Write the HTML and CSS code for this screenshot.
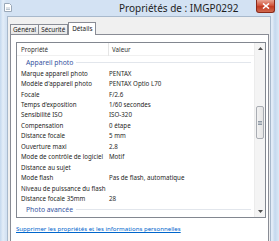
FILE: index.html
```html
<!DOCTYPE html>
<html lang="fr">
<head>
<meta charset="utf-8">
<title>Propriétés de : IMGP0292</title>
<link rel="stylesheet" href="styles.css">
</head>
<body>
<div class="window">
  <div class="titlebar">
    <svg class="appicon" width="8" height="9" viewBox="0 0 8 9"><path d="M0.5 0.5h5l2 2v6h-7z" fill="#fff" stroke="#9aa8b8"/><path d="M2 5h4M2 6.5h4" stroke="#b8c4d0"/></svg>
    <div class="title">Propriétés de : IMGP0292</div>
    <div class="close"><svg width="8" height="6" viewBox="0 0 8 6"><path d="M1 0.5L7 5.5M7 0.5L1 5.5" stroke="#fff" stroke-width="1.6"/></svg></div>
  </div>
  <div class="frame">
    <div class="client">
      <div class="tabs">
        <div class="tab">Général</div>
        <div class="tab">Sécurité</div>
        <div class="tab active">Détails</div>
      </div>
      <div class="panel">
        <div class="listview">
          <div class="lv-main">
            <div class="header"><span class="c1">Propriété</span><span class="c2">Valeur</span></div>
            <div class="group"><span>Appareil photo</span><i></i></div>
            <div class="row"><span class="c1">Marque appareil photo</span><span class="c2">PENTAX</span></div>
            <div class="row"><span class="c1">Modèle d'appareil photo</span><span class="c2">PENTAX Optio L70</span></div>
            <div class="row"><span class="c1">Focale</span><span class="c2">F/2.6</span></div>
            <div class="row"><span class="c1">Temps d'exposition</span><span class="c2">1/60 secondes</span></div>
            <div class="row"><span class="c1">Sensibilité ISO</span><span class="c2">ISO-320</span></div>
            <div class="row"><span class="c1">Compensation</span><span class="c2">0 étape</span></div>
            <div class="row"><span class="c1">Distance focale</span><span class="c2">5 mm</span></div>
            <div class="row"><span class="c1">Ouverture maxi</span><span class="c2">2.8</span></div>
            <div class="row"><span class="c1">Mode de contrôle de logiciel</span><span class="c2">Motif</span></div>
            <div class="row"><span class="c1">Distance au sujet</span><span class="c2"></span></div>
            <div class="row"><span class="c1">Mode flash</span><span class="c2">Pas de flash, automatique</span></div>
            <div class="row"><span class="c1">Niveau de puissance du flash</span><span class="c2"></span></div>
            <div class="row"><span class="c1">Distance focale 35mm</span><span class="c2">28</span></div>
            <div class="group"><span>Photo avancée</span><i></i></div>
          </div>
          <div class="scrollbar">
            <div class="arrow"><svg width="5" height="3" viewBox="0 0 5 3"><path d="M0 3L2.5 0L5 3z" fill="#4d4d4d"/></svg></div>
            <div class="track">
              <div class="gap-top"></div>
              <div class="thumb"><svg width="4" height="4" viewBox="0 0 4 4"><path d="M0 0.5h4M0 2h4M0 3.5h4" stroke="#8f9aa6"/></svg></div>
            </div>
            <div class="arrow"><svg width="5" height="3" viewBox="0 0 5 3"><path d="M0 0L2.5 3L5 0z" fill="#4d4d4d"/></svg></div>
          </div>
        </div>
        <a class="link" href="#">Supprimer les propriétés et les informations personnelles</a>
      </div>
    </div>
  </div>
</div>
</body>
</html>
```

FILE: styles.css
```css
* { box-sizing: border-box; }
html, body { margin: 0; padding: 0; }
body {
  width: 279px;
  height: 241px;
  overflow: hidden;
  background: #d6e4f3;
  font-family: "Noto Sans", "Open Sans", sans-serif;
}
.window {
  height: 241px;
  display: flex;
  flex-direction: column;
  background: linear-gradient(90deg, #c4d8ee 0px, #e3edf8 3px, #d3e2f3 6px, #d3e2f3 270px, #e6eef8 272px, #c4d8ee 275px, #dce8f5 279px);
}
.titlebar {
  height: 16px;
  display: flex;
  align-items: center;
  padding-left: 4px;
  position: relative;
}
.appicon { display: block; margin-top: -2px; }
.title {
  margin-left: 107px;
  font-size: 10px;
  color: #1e1e1e;
  white-space: nowrap;
}
.close {
  position: absolute;
  left: 256px;
  top: 0;
  width: 19px;
  height: 13px;
  border: 1px solid #8a2a1a;
  border-top: none;
  border-radius: 0 0 3px 3px;
  background: linear-gradient(#e8a493, #d2563e 45%, #c23b22 55%, #d0684e);
  display: flex;
  align-items: center;
  justify-content: center;
}
.close svg { display: block; }
.frame {
  flex: 1;
  padding: 0 8px 0 7px;
  display: flex;
}
.client {
  flex: 1;
  background: #f0f0f0;
  border: 1px solid #a8b9cc;
  border-bottom: none;
  padding: 5px 1px 0 2px;
  display: flex;
  flex-direction: column;
}
.tabs {
  display: flex;
  align-items: flex-end;
  height: 12px;
  position: relative;
  z-index: 1;
}
.tab {
  height: 10px;
  padding: 0 2px;
  font-size: 6.3px;
  line-height: 9px;
  color: #1a1a1a;
  border: 1px solid #898c95;
  border-bottom: none;
  margin-right: -1px;
  background: linear-gradient(#f6f6f6, #e6e6e6);
}
.tab.active {
  height: 13px;
  padding: 1px 3px 0;
  margin-bottom: -1px;
  margin-left: 1px;
  background: #fff;
}
.panel {
  flex: 1;
  background: #fff;
  border: 1px solid #898c95;
  border-bottom: none;
  padding: 7px 2px 0 5px;
  display: flex;
  flex-direction: column;
}
.listview {
  height: 176px;
  border: 1px solid #828790;
  display: flex;
  background: #fff;
}
.lv-main {
  flex: 1;
  display: flex;
  flex-direction: column;
  font-size: 6.2px;
  color: #262626;
}
.header {
  height: 13px;
  display: flex;
  align-items: center;
  border-bottom: 1px solid #f0f0f0;
  color: #333;
}
.c1 {
  width: 92px;
  padding-left: 4px;
  white-space: nowrap;
  flex: none;
}
.c2 { white-space: nowrap; }
.header .c1 { border-right: 1px solid #e5e5e5; height: 13px; line-height: 13px; }
.header .c2 { padding-left: 3px; }
.group {
  height: 12px;
  display: flex;
  align-items: center;
  padding-left: 9px;
  padding-right: 3px;
  color: #3553a0;
  font-size: 6.8px;
}
.group i {
  flex: 1;
  height: 1px;
  margin-left: 3px;
  background: #e2e6ec;
}
.row {
  height: 10.45px;
  display: flex;
  align-items: center;
}
.scrollbar {
  width: 11px;
  display: flex;
  flex-direction: column;
  background: #f4f4f4;
  border-left: 1px solid #ececec;
}
.arrow {
  height: 11px;
  display: flex;
  align-items: center;
  justify-content: center;
}
.arrow svg { display: block; }
.track { flex: 1; display: flex; flex-direction: column; padding: 0 1px; }
.gap-top { height: 52px; }
.thumb {
  height: 33px;
  border: 1px solid #a9adb3;
  border-radius: 2px;
  background: linear-gradient(90deg, #f2f2f2, #e4e4e4);
  display: flex;
  align-items: center;
  justify-content: center;
}
.thumb svg { display: block; }
.link {
  margin-top: 6px;
  font-size: 6.1px;
  color: #0066cc;
  text-decoration: underline;
  white-space: nowrap;
}
```
